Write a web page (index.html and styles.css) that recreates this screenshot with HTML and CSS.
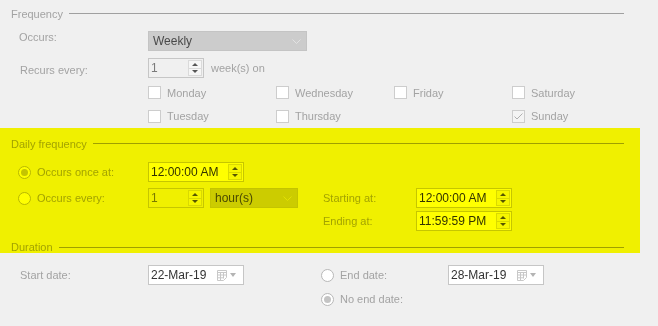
FILE: index.html
```html
<!DOCTYPE html>
<html lang="en">
<head>
    <meta charset="UTF-8">
    <meta name="viewport" content="width=device-width, initial-scale=1.0">
    <title>Schedule</title>
    <link rel="stylesheet" href="styles.css">
</head>
<body>
    <div class="schedule">
        <section class="group frequency">
            <div class="group-title"><span>Frequency</span><span class="rule"></span></div>
            <div class="row row-occurs">
                <span class="label">Occurs:</span>
                <div class="select select-weekly">
                    <span>Weekly</span>
                    <svg class="chevron" width="9" height="5" viewBox="0 0 9 5"><polyline points="0.5,0.5 4.5,4.5 8.5,0.5"/></svg>
                </div>
            </div>
            <div class="row row-recurs">
                <span class="label">Recurs every:</span>
                <div class="spin spin-num">
                    <span class="value">1</span>
                    <span class="spin-buttons"><span class="up"></span><span class="down"></span></span>
                </div>
                <span class="unit">week(s) on</span>
            </div>
            <div class="days">
                <label class="check"><span class="box"></span>Monday</label>
                <label class="check"><span class="box"></span>Wednesday</label>
                <label class="check"><span class="box"></span>Friday</label>
                <label class="check"><span class="box"></span>Saturday</label>
                <label class="check"><span class="box"></span>Tuesday</label>
                <label class="check"><span class="box"></span>Thursday</label>
                <span></span>
                <label class="check checked"><span class="box"><svg width="11" height="11" viewBox="0 0 11 11"><polyline points="1.5,5.5 4,8 9.5,2.5"/></svg></span>Sunday</label>
            </div>
        </section>

        <section class="group highlight">
            <div class="group-title"><span>Daily frequency</span><span class="rule"></span></div>
            <div class="daily">
                <label class="radio checked"><span class="dot"></span>Occurs once at:</label>
                <div class="cell">
                    <div class="spin spin-time">
                        <span class="value">12:00:00 AM</span>
                        <span class="spin-buttons"><span class="up"></span><span class="down"></span></span>
                    </div>
                </div>
                <span></span>
                <span></span>

                <label class="radio"><span class="dot"></span>Occurs every:</label>
                <div class="cell every">
                    <div class="spin spin-num">
                        <span class="value">1</span>
                        <span class="spin-buttons"><span class="up"></span><span class="down"></span></span>
                    </div>
                    <div class="select select-hours">
                        <span>hour(s)</span>
                        <svg class="chevron" width="9" height="5" viewBox="0 0 9 5"><polyline points="0.5,0.5 4.5,4.5 8.5,0.5"/></svg>
                    </div>
                </div>
                <span class="side-label">Starting at:</span>
                <div class="spin spin-time">
                    <span class="value">12:00:00 AM</span>
                    <span class="spin-buttons"><span class="up"></span><span class="down"></span></span>
                </div>

                <span></span>
                <span></span>
                <span class="side-label">Ending at:</span>
                <div class="spin spin-time">
                    <span class="value">11:59:59 PM</span>
                    <span class="spin-buttons"><span class="up"></span><span class="down"></span></span>
                </div>
            </div>
            <div class="group-title duration-title"><span>Duration</span><span class="rule"></span></div>
        </section>

        <section class="duration">
            <span class="label">Start date:</span>
            <div class="date">
                <span class="value">22-Mar-19</span>
                <svg class="calendar" width="10" height="11" viewBox="0 0 10 11"><path d="M0.5 0.5h9v7l-3 3h-6z"/><path d="M0.5 2.5h9M3.5 2.5v8M6.5 2.5v6M0.5 5h9M0.5 7.8h6"/></svg>
                <span class="arrow"></span>
            </div>
            <label class="radio"><span class="dot"></span>End date:</label>
            <div class="date">
                <span class="value">28-Mar-19</span>
                <svg class="calendar" width="10" height="11" viewBox="0 0 10 11"><path d="M0.5 0.5h9v7l-3 3h-6z"/><path d="M0.5 2.5h9M3.5 2.5v8M6.5 2.5v6M0.5 5h9M0.5 7.8h6"/></svg>
                <span class="arrow"></span>
            </div>

            <span></span>
            <span></span>
            <label class="radio checked"><span class="dot"></span>No end date:</label>
            <span></span>
        </section>
    </div>
</body>
</html>
```

FILE: styles.css
```css
:root {
    --page-color: #f0f0f0;
    --label-color: #a3a3a3;
    --value-color: #333;
    --rule-color: #a0a0a0;
    --border-color: #c6c6c6;
    --select-color: #cccccc;
}

html, body {
    margin: 0;
    background-color: var(--page-color);
}

body {
    font-family: "Liberation Sans", Arial, sans-serif;
    font-size: 11px;
    color: var(--label-color);
}

.schedule {
    width: 658px;
    background-color: var(--page-color);
}

/* group headers with a rule */
.group-title {
    display: flex;
    align-items: center;
    gap: 6px;
    width: 624px;
    height: 14px;
    line-height: 14px;
    padding-left: 11px;
    box-sizing: border-box;
}

.rule {
    flex: 1;
    height: 1px;
    margin-bottom: 2px;
    background-color: var(--rule-color);
}

.frequency {
    padding-top: 7px;
}

.row {
    display: flex;
    align-items: center;
    height: 20px;
}

.label {
    width: 148px;
    padding-left: 19px;
    box-sizing: border-box;
}

.row-occurs {
    margin-top: 10px;
    align-items: flex-start;
}

.row-occurs .label {
    line-height: 13px;
}

.row-recurs {
    margin-top: 7px;
}

.row-recurs .label {
    padding-top: 3px;
    padding-left: 20px;
}

.unit {
    margin-left: 7px;
}

/* inputs */
.select {
    display: flex;
    align-items: center;
    height: 20px;
    padding: 0 5px 0 4px;
    box-sizing: border-box;
    background-color: var(--select-color);
    border: 1px solid #c4c4c4;
    color: #4a4a4a;
    font-size: 12px;
}

.select-weekly {
    width: 159px;
}

.select-hours {
    width: 88px;
    margin-left: 6px;
}

.chevron {
    margin-left: auto;
    fill: none;
    stroke: #e2e2e2;
}

.spin {
    display: flex;
    align-items: center;
    height: 20px;
    padding-left: 2px;
    box-sizing: border-box;
    border: 1px solid var(--border-color);
    color: var(--value-color);
    font-size: 12px;
}

.spin-num {
    width: 56px;
    color: #7a7a7a;
}

.spin-time {
    width: 96px;
    background-color: #fff;
}

.spin-buttons {
    display: flex;
    flex-direction: column;
    width: 14px;
    height: 16px;
    margin-left: auto;
    margin-right: 1px;
    border: 1px solid #dadada;
    box-sizing: border-box;
    background-color: #f6f6f6;
}

.spin-buttons span {
    flex: 1;
    display: flex;
    align-items: center;
    justify-content: center;
}

.spin-buttons .up {
    border-bottom: 1px solid #dadada;
}

.spin-buttons span::before {
    content: "";
    border-left: 3px solid transparent;
    border-right: 3px solid transparent;
}

.spin-buttons .up::before {
    border-bottom: 3px solid #555;
}

.spin-buttons .down::before {
    border-top: 3px solid #555;
}

/* weekday checkboxes */
.days {
    display: grid;
    grid-template-columns: 128px 118px 118px auto;
    grid-template-rows: 23px 24px;
    margin-top: 3px;
    padding-left: 148px;
}

.check {
    display: flex;
    align-items: center;
    gap: 6px;
}

.check .box {
    display: flex;
    align-items: center;
    justify-content: center;
    width: 13px;
    height: 13px;
    box-sizing: border-box;
    border: 1px solid #cdcdcd;
    background-color: #fff;
}

.check.checked .box {
    background-color: #f4f4f4;
}

.check .box svg {
    fill: none;
    stroke: #b0b0b0;
}

/* highlighted block */
.highlight {
    position: relative;
    width: 640px;
    height: 125px;
    padding-top: 9px;
    box-sizing: border-box;
}

.highlight::after {
    content: "";
    position: absolute;
    top: 0;
    left: 0;
    right: 0;
    bottom: 0;
    background-color: #ffff00;
    mix-blend-mode: multiply;
    pointer-events: none;
}

.daily {
    display: grid;
    grid-template-columns: 148px 175px 93px 96px;
    grid-template-rows: 26px 23px 20px;
    align-items: start;
    margin-top: 11px;
}

.cell {
    display: flex;
}

.radio {
    display: flex;
    align-items: center;
    gap: 6px;
    height: 20px;
    padding-left: 18px;
}

.radio .dot {
    display: flex;
    align-items: center;
    justify-content: center;
    width: 13px;
    height: 13px;
    box-sizing: border-box;
    border: 1px solid #b8b8b8;
    border-radius: 50%;
    background-color: #fff;
}

.radio.checked .dot::after {
    content: "";
    width: 7px;
    height: 7px;
    border-radius: 50%;
    background-color: #c4c4c4;
}

.side-label {
    line-height: 20px;
}

.duration-title {
    margin-top: 9px;
}

.duration-title .rule {
    margin-bottom: 0;
}

/* duration */
.duration {
    display: grid;
    grid-template-columns: 148px 173px 127px 96px;
    grid-template-rows: 24px 20px;
    align-items: start;
    padding-top: 12px;
}

.duration > .label {
    line-height: 20px;
    padding-left: 20px;
}

.duration .radio {
    padding-left: 0;
}

.date {
    display: flex;
    align-items: center;
    width: 96px;
    height: 20px;
    padding: 0 7px 0 2px;
    box-sizing: border-box;
    border: 1px solid var(--border-color);
    background-color: #fff;
    color: var(--value-color);
    font-size: 12px;
}

.calendar {
    margin-left: auto;
    fill: none;
    stroke: #c8c8c8;
}

.arrow {
    margin-left: 3px;
    border-left: 3.5px solid transparent;
    border-right: 3.5px solid transparent;
    border-top: 4px solid #b4b4b4;
}
```
